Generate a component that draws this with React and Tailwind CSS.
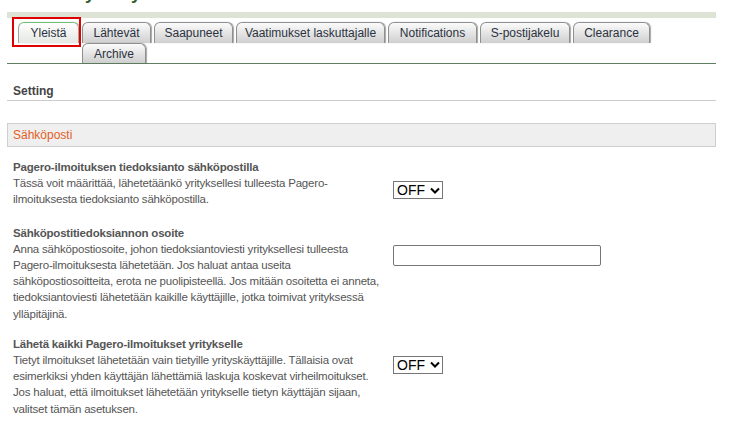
import React from 'react';

const tabs = [
  { label: 'Yleistä', w: 'w-[61px]', active: true },
  { label: 'Lähtevät', w: 'w-[69px]' },
  { label: 'Saapuneet', w: 'w-[79px]' },
  { label: 'Vaatimukset laskuttajalle', w: 'w-[149px]' },
  { label: 'Notifications', w: 'w-[89px]' },
  { label: 'S-postijakelu', w: 'w-[90px]' },
  { label: 'Clearance', w: 'w-[77px]' },
];

const Tab = ({ label, w, active }) => (
  <div
    className={
      'h-[21px] flex items-center justify-center rounded-t-[6px] border border-b-0 text-[12px] text-[#2b3240] shadow-[1px_0_1px_rgba(0,0,0,0.35)] ' +
      w +
      (active
        ? ' border-[#9aa89a] border-t-[#6fbf73] bg-gradient-to-b from-[#ffffff] to-[#e4e7e2]'
        : ' border-[#8f8f8f] bg-gradient-to-b from-[#fbfbfb] to-[#cfcfcf]')
    }
  >
    {label}
  </div>
);

const OffSelect = () => (
  <div className="w-[50px] h-[18px] border border-[#767676] flex items-center pl-[3px] gap-[5px] bg-white">
    <span className="text-[14px] leading-none text-black">OFF</span>
    <svg width="10" height="7" viewBox="0 0 10 7">
      <path d="M1 1.5 L5 5.5 L9 1.5" fill="none" stroke="#000" strokeWidth="2" />
    </svg>
  </div>
);

const Item = ({ title, lines, control, pt, mt }) => (
  <div className={'flex ' + mt}>
    <div className="w-[386px] pl-[6px] text-[11.5px] tracking-[-0.2px] leading-[16.2px] text-[#555] whitespace-nowrap">
      <div className="font-bold">{title}</div>
      <div>
        {lines.map((l, i) => (
          <div key={i}>{l}</div>
        ))}
      </div>
    </div>
    <div className={pt}>{control}</div>
  </div>
);

export default function App() {
  return (
    <div className="w-[742px] h-[434px] overflow-hidden bg-white relative font-['Liberation_Sans',Arial,sans-serif]">
      <div className="px-[7px] pr-[26px]">
        <div className="h-[12px] overflow-hidden">
          <div className="mt-[-21px] pl-[78px] text-[18px] leading-[28px] font-bold text-[#2f5e2f]">yleisty</div>
        </div>
        <div className="h-[6px] bg-[#dde3d5]" />
        <div className="mt-[4px] pl-[11px]">
          <div className="flex gap-[3px]">
            {tabs.map((t) => (
              <Tab key={t.label} {...t} />
            ))}
          </div>
          <div className="flex pl-[64px]">
            <div className="h-[20px] w-[64px] flex items-center justify-center rounded-t-[6px] border border-b-0 border-[#8f8f8f] bg-gradient-to-b from-[#fbfbfb] to-[#cfcfcf] text-[12px] text-[#2b3240] shadow-[1px_0_1px_rgba(0,0,0,0.35)]">
              Archive
            </div>
          </div>
        </div>
        <div className="h-px bg-[#5f8060]" />

        <div className="h-[36px] flex items-end pl-[6px]">
          <span className="text-[12px] font-bold text-[#444]">Setting</span>
        </div>
        <div className="h-px bg-[#cccccc]" />

        <div className="mt-[22px] h-[24px] border border-[#cfcfcf] bg-[#efefef] flex items-center pl-[5px]">
          <span className="text-[12px] text-[#e2601f]">Sähköposti</span>
        </div>

        <div className="mt-[12px] flex flex-col">
          <Item
            title="Pagero-ilmoituksen tiedoksianto sähköpostilla"
            lines={[
              'Tässä voit määrittää, lähetetäänkö yrityksellesi tulleesta Pagero-',
              'ilmoituksesta tiedoksianto sähköpostilla.',
            ]}
            mt="mt-0"
            pt="pt-[22px]"
            control={<OffSelect />}
          />
          <Item
            title="Sähköpostitiedoksiannon osoite"
            lines={[
              'Anna sähköpostiosoite, johon tiedoksiantoviesti yrityksellesi tulleesta',
              'Pagero-ilmoituksesta lähetetään. Jos haluat antaa useita',
              'sähköpostiosoitteita, erota ne puolipisteellä. Jos mitään osoitetta ei anneta,',
              'tiedoksiantoviesti lähetetään kaikille käyttäjille, jotka toimivat yrityksessä',
              'ylläpitäjinä.',
            ]}
            mt="mt-[17px]"
            pt="pt-[20px]"
            control={<div className="w-[208px] h-[21px] border border-[#767676] rounded-[2px] bg-white" />}
          />
          <Item
            title="Lähetä kaikki Pagero-ilmoitukset yritykselle"
            lines={[
              'Tietyt ilmoitukset lähetetään vain tietyille yrityskäyttäjille. Tällaisia ovat',
              'esimerkiksi yhden käyttäjän lähettämiä laskuja koskevat virheilmoitukset.',
              'Jos haluat, että ilmoitukset lähetetään yritykselle tietyn käyttäjän sijaan,',
              'valitset tämän asetuksen.',
            ]}
            mt="mt-[14px]"
            pt="pt-[20px]"
            control={<OffSelect />}
          />
        </div>
      </div>

      <div className="absolute left-[12px] top-[17px] w-[69px] h-[30px] border-2 border-[#e00000] pointer-events-none" />
    </div>
  );
}
